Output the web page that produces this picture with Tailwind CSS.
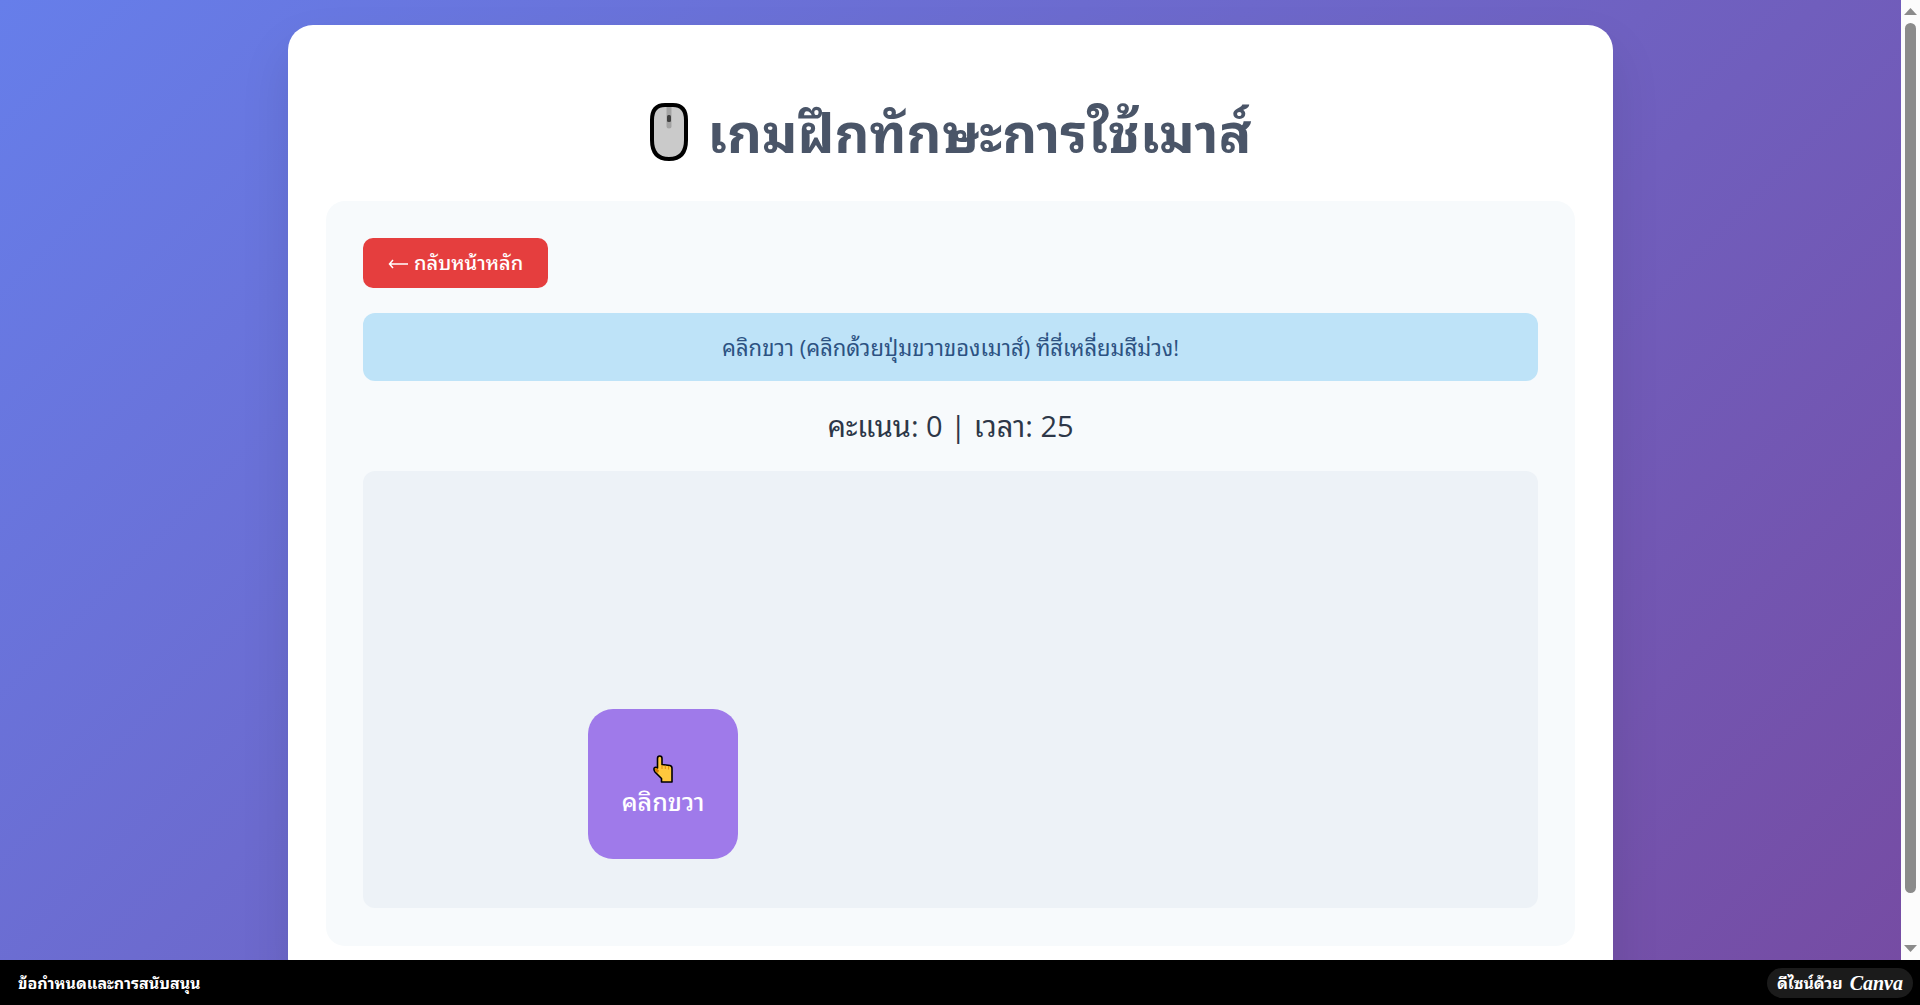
<!DOCTYPE html>
<html lang="th">
<head>
  <meta charset="UTF-8">
  <meta name="viewport" content="width=device-width, initial-scale=1.0">
  <title>เกมฝึกทักษะการใช้เมาส์</title>
  <script src="https://cdn.jsdelivr.net/npm/@tailwindcss/browser@4"></script>
</head>
<body class="h-screen flex flex-col overflow-hidden bg-black font-['Open_Sans','Noto_Sans_Thai_Looped','Leelawadee_UI','Loma','Waree','Noto_Sans_Thai','Noto_Sans',sans-serif]">

  <div class="flex flex-1 min-h-0">
    <!-- Page -->
    <main class="flex-1 overflow-y-auto [scrollbar-width:none]">
      <div class="p-[25px] bg-linear-[135deg,#667eea_0%,#764ba2_100%]">
        <div class="max-w-[1325px] mx-auto bg-white rounded-[25px] p-[38px] shadow-[0_25px_50px_rgba(0,0,0,0.1)]">
          <h1 class="flex items-center justify-center gap-5 h-[100px] my-[19px] text-[54px] font-bold text-[#4a5568]">
            <svg class="w-[38px] h-[58px]" viewBox="0 0 38 58" aria-hidden="true">
              <path d="M2 17Q2 2 15 2H23Q36 2 36 17V37Q36 56 19 56Q2 56 2 37Z" fill="#cacaca" stroke="#000" stroke-width="4"/>
              <path d="M16.500 4h5v19a2.500 2.500 0 0 1-5 0z" fill="#a3a3a3"/>
              <rect x="17" y="12" width="4" height="7" rx="1.500" fill="#3f3f3f"/>
            </svg>
            เกมฝึกทักษะการใช้เมาส์
          </h1>

          <!-- Game -->
          <section class="bg-[#f7fafc] rounded-[19px] p-[37px]">
            <button id="back" class="flex items-center gap-[6px] h-[50px] px-[25px] rounded-[10px] bg-[#e53e3e] text-white text-[20px] font-medium cursor-pointer">
              <svg class="w-5 h-3" viewBox="0 0 20 12" fill="none" stroke="currentColor" stroke-width="1.500" aria-hidden="true"><path d="M1 7H20M5 3L1.500 7L5 11"/></svg>
              กลับหน้าหลัก
            </button>

            <p class="flex items-center justify-center h-[68px] mt-[25px] rounded-xl bg-[#bee3f8] text-[#2c5282] text-[22px]">คลิกขวา (คลิกด้วยปุ่มขวาของเมาส์) ที่สี่เหลี่ยมสีม่วง!</p>

            <p class="flex items-center justify-center h-[90px] text-[29px] text-[#2d3748]">
              <span>คะแนน: <span id="score">0</span> | เวลา: <span id="time">25</span></span>
            </p>

            <div class="relative h-[437px] mb-px rounded-xl bg-[#edf2f7]">
              <button id="target" class="absolute left-[225px] top-[238px] size-[150px] pt-2 rounded-[25px] bg-[#9f7aea] text-white text-[25px] font-medium flex flex-col items-center justify-center cursor-pointer">
                <svg class="w-5 h-7" viewBox="0 0 20 28" aria-hidden="true">
                  <path d="M4.500 3.500Q4.500 1 6.700 1Q9 1 9 3.500V9.500L17 10.500Q19 11 19 13.500V27H8.500V23.500L2 17Q.500 15 1.200 13Q2.500 11.500 4.500 13Z" fill="#ffc83d" stroke="#000" stroke-width="1.600" stroke-linejoin="round"/>
                  <path d="M1.800 13.500Q3.500 12.500 4.500 14L6 15.500L5 18L2.300 16Z" fill="#d67d00"/>
                  <path d="M9 10v4M12.300 10.500v3.500M15.600 11v3.500" stroke="#d67d00" stroke-width=".8"/>
                </svg>
                คลิกขวา
              </button>
            </div>
          </section>
        </div>
      </div>
    </main>

    <!-- Scroll bar -->
    <div class="w-[19px] bg-[#fcfcfc] flex flex-col items-center justify-between py-2 pr-px" aria-hidden="true">
      <svg class="w-[13px] h-[7px]" viewBox="0 0 13 7"><path d="M6.500 0L13 7H0z" fill="#8b8b8b"/></svg>
      <div class="flex-1 w-full flex justify-center pt-2 pb-[52px]">
        <div class="w-[11px] h-full rounded-full bg-[#8b8b8b]"></div>
      </div>
      <svg class="w-[13px] h-[7px]" viewBox="0 0 13 7"><path d="M0 0H13L6.500 7z" fill="#8b8b8b"/></svg>
    </div>
  </div>

  <!-- Footer -->
  <footer class="h-[45px] shrink-0 flex items-center justify-between pl-[18px] pr-[7px] bg-black text-white text-[16px] font-bold">
    <a href="#">ข้อกำหนดและการสนับสนุน</a>
    <a href="#" class="flex items-center gap-[7px] h-[30px] px-[10px] rounded-full bg-[#1b1b1b]">
      <span>ดีไซน์ด้วย</span>
      <span class="font-['Liberation_Serif',cursive] italic text-[20px]">Canva</span>
    </a>
  </footer>

  <script>
    const target = document.getElementById('target');
    const score = document.getElementById('score');

    // Only right clicks give a point
    target.addEventListener('contextmenu', (e) => {
      e.preventDefault();
      score.textContent = Number(score.textContent) + 1;
    });
  </script>
</body>
</html>
